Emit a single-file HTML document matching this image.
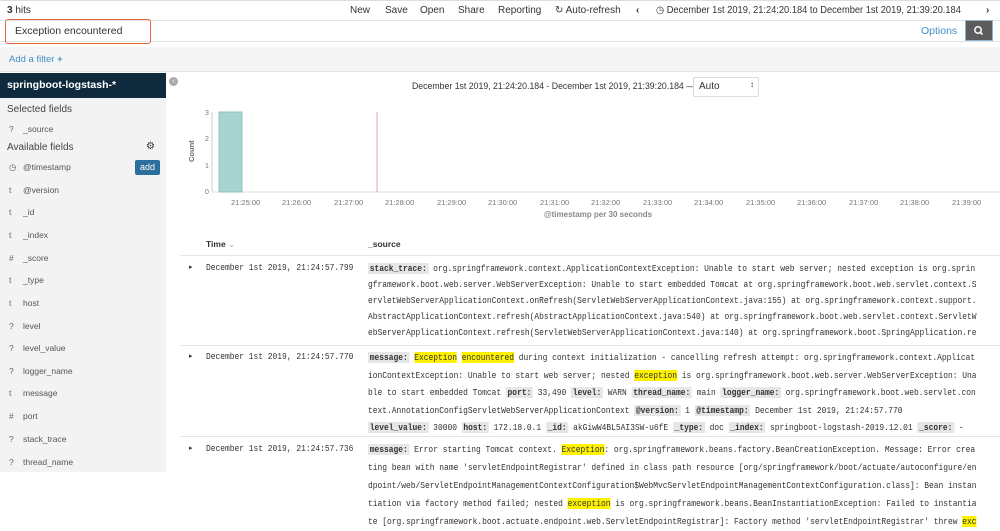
<!DOCTYPE html>
<html><head><style>
*{margin:0;padding:0;box-sizing:border-box}
body{width:1000px;height:522px;overflow:hidden;background:#fff;font-family:"Liberation Sans",sans-serif;color:#333;position:relative}
.a{position:absolute;white-space:nowrap}
.nav{font-size:10px;top:5px;color:#333}
.f{font-size:8.5px;color:#555;left:9px}
.f b{display:inline-block;width:14px;font-weight:normal;color:#666}
.mono{font-family:"Liberation Mono",monospace}
.src{font-size:9.4px;line-height:16px;left:368px;width:724px;white-space:normal;word-break:break-all;color:#333;transform:scaleX(0.845);transform-origin:0 0}
.k{background:#e6e6e6;font-weight:bold;padding:0 2px}
.h{background:#fff200}
.tl{font-size:9.4px;color:#333;transform:scaleX(0.845);transform-origin:0 0}
.xl{font-size:7.5px;color:#777;top:198px}
</style></head><body>
<div class="a" style="left:0;top:0;width:1000px;height:1px;background:#ddd"></div>
<div class="a nav" style="left:7px"><b>3</b> hits</div>
<div class="a nav" style="left:350px">New</div>
<div class="a nav" style="left:385px">Save</div>
<div class="a nav" style="left:420px">Open</div>
<div class="a nav" style="left:458px">Share</div>
<div class="a nav" style="left:498px">Reporting</div>
<div class="a nav" style="left:555px">&#x21bb; Auto-refresh</div>
<div class="a nav" style="left:636px;font-weight:bold">&#x2039;</div>
<div class="a nav" style="left:656px;transform:scaleX(0.93);transform-origin:0 0">&#x25F7; December 1st 2019, 21:24:20.184 to December 1st 2019, 21:39:20.184</div>
<div class="a nav" style="left:986px;font-weight:bold">&#x203A;</div>
<div class="a" style="left:0;top:20px;width:1000px;height:22px;border-top:1px solid #e4e4e4;border-bottom:1px solid #e4e4e4"></div>
<div class="a" style="left:5px;top:19px;width:146px;height:25px;border:1.5px solid #e8623f;border-radius:3px"></div>
<div class="a" style="left:15px;top:25px;font-size:10.5px;color:#333">Exception encountered</div>
<div class="a" style="left:921px;top:25px;font-size:10.5px;color:#3f8fc2">Options</div>
<div class="a" style="left:965px;top:20px;width:28px;height:21px;background:#5c5c5c;border:1px solid #8fb4cf"><svg width="26" height="19"><circle cx="12" cy="9" r="3.2" fill="none" stroke="#fff" stroke-width="1.5"/><line x1="14.3" y1="11.3" x2="16.5" y2="13.5" stroke="#fff" stroke-width="1.6"/></svg></div>
<div class="a" style="left:0;top:47px;width:1000px;height:25px;background:#f5f5f5;border-bottom:1px solid #e6e6e6"></div>
<div class="a" style="left:9px;top:54px;font-size:9.5px;color:#3f8fc2">Add a filter <b>+</b></div>
<div class="a" style="left:0;top:73px;width:166px;height:399px;background:#f3f3f3"></div>
<div class="a" style="left:0;top:73px;width:166px;height:25px;background:#0f2a3c;color:#fff;font-weight:bold;font-size:10.5px;padding:6px 7px">springboot-logstash-*</div>
<div class="a" style="left:7px;top:104px;font-size:10px;color:#444">Selected fields</div>
<div class="a f" style="top:124px"><b>?</b>_source</div>
<div class="a" style="left:7px;top:142px;font-size:10px;color:#444">Available fields</div>
<div class="a" style="left:146px;top:141px;font-size:10px;color:#333">&#x2699;</div>
<div class="a f" style="top:162px"><b>&#x25F7;</b>@timestamp</div>
<div class="a" style="left:135px;top:160px;width:25px;height:15px;background:#2d6f9c;color:#fff;font-size:9px;text-align:center;line-height:15px;border-radius:2px">add</div>
<div class="a f" style="top:185px"><b>t</b>@version</div>
<div class="a f" style="top:207px"><b>t</b>_id</div>
<div class="a f" style="top:230px"><b>t</b>_index</div>
<div class="a f" style="top:253px"><b>#</b>_score</div>
<div class="a f" style="top:275px"><b>t</b>_type</div>
<div class="a f" style="top:298px"><b>t</b>host</div>
<div class="a f" style="top:321px"><b>?</b>level</div>
<div class="a f" style="top:343px"><b>?</b>level_value</div>
<div class="a f" style="top:366px"><b>?</b>logger_name</div>
<div class="a f" style="top:388px"><b>t</b>message</div>
<div class="a f" style="top:411px"><b>#</b>port</div>
<div class="a f" style="top:434px"><b>?</b>stack_trace</div>
<div class="a f" style="top:457px"><b>?</b>thread_name</div>
<div class="a" style="left:169px;top:77px;width:9px;height:9px;border-radius:50%;background:#aaa;color:#fff;font-size:7px;line-height:9px;text-align:center">&#x2039;</div>
<div class="a" style="left:412px;top:81px;font-size:9px;color:#333;transform:scaleX(0.97);transform-origin:0 0">December 1st 2019, 21:24:20.184 - December 1st 2019, 21:39:20.184 —</div>
<div class="a" style="left:693px;top:77px;width:66px;height:20px;border:1px solid #ddd;border-radius:2px;font-size:10px;padding:3px 5px;background:#fff">Auto<span style="position:absolute;right:4px;top:2px;font-size:8px">&#x2195;</span></div>
<svg class="a" style="left:170px;top:100px" width="830" height="130">
<g font-family="Liberation Sans" font-size="7" fill="#777">
<text x="35" y="15">3</text><text x="35" y="41">2</text><text x="35" y="68">1</text><text x="35" y="94">0</text>
<text transform="translate(24,62) rotate(-90)" font-weight="bold" font-size="7.5" fill="#666">Count</text>
</g>
<line x1="42" y1="12" x2="42" y2="92" stroke="#ccc"/>
<line x1="42" y1="92" x2="830" y2="92" stroke="#ddd"/>
<rect x="49" y="12" width="23" height="80" fill="#a7d4cf" stroke="#8cc4be"/>
<line x1="207" y1="12" x2="207" y2="92" stroke="#e8a0a0"/>
<text x="428" y="117" font-family="Liberation Sans" font-size="8" font-weight="bold" fill="#888" text-anchor="middle">@timestamp per 30 seconds</text>
</svg>
<div class="a xl" style="left:231px">21:25:00</div><div class="a xl" style="left:282px">21:26:00</div><div class="a xl" style="left:334px">21:27:00</div><div class="a xl" style="left:385px">21:28:00</div><div class="a xl" style="left:437px">21:29:00</div><div class="a xl" style="left:488px">21:30:00</div><div class="a xl" style="left:540px">21:31:00</div><div class="a xl" style="left:591px">21:32:00</div><div class="a xl" style="left:643px">21:33:00</div><div class="a xl" style="left:694px">21:34:00</div><div class="a xl" style="left:746px">21:35:00</div><div class="a xl" style="left:797px">21:36:00</div><div class="a xl" style="left:849px">21:37:00</div><div class="a xl" style="left:900px">21:38:00</div><div class="a xl" style="left:952px">21:39:00</div>
<div class="a" style="left:206px;top:239px;font-size:8.5px;font-weight:bold">Time <span style="color:#aaa;font-weight:normal">&#x2304;</span></div>
<div class="a" style="left:368px;top:239px;font-size:8.5px;font-weight:bold">_source</div>
<div class="a" style="left:180px;top:255px;width:820px;height:1px;background:#e6e6e6"></div>
<div class="a" style="left:189px;top:263px;font-size:7px">&#x25B8;</div>
<div class="a mono tl" style="left:206px;top:262px">December 1st 2019, 21:24:57.799</div>
<div class="a mono src" style="top:261px"><span class="k">stack_trace:</span> org.springframework.context.ApplicationContextException: Unable to start web server; nested exception is org.springframework.boot.web.server.WebServerException: Unable to start embedded Tomcat at org.springframework.boot.web.servlet.context.ServletWebServerApplicationContext.onRefresh(ServletWebServerApplicationContext.java:155) at org.springframework.context.support.AbstractApplicationContext.refresh(AbstractApplicationContext.java:540) at org.springframework.boot.web.servlet.context.ServletWebServerApplicationContext.refresh(ServletWebServerApplicationContext.java:140) at org.springframework.boot.SpringApplication.re</div>
<div class="a" style="left:180px;top:345px;width:820px;height:1px;background:#e6e6e6"></div>
<div class="a" style="left:189px;top:352px;font-size:7px">&#x25B8;</div>
<div class="a mono tl" style="left:206px;top:351px">December 1st 2019, 21:24:57.770</div>
<div class="a mono src" style="top:349px;line-height:17.5px"><span class="k">message:</span> <span class="h">Exception</span> <span class="h">encountered</span> during context initialization - cancelling refresh attempt: org.springframework.context.ApplicationContextException: Unable to start web server; nested <span class="h">exception</span> is org.springframework.boot.web.server.WebServerException: Unable to start embedded Tomcat <span class="k">port:</span> 33,490 <span class="k">level:</span> WARN <span class="k">thread_name:</span> main <span class="k">logger_name:</span> org.springframework.boot.web.servlet.context.AnnotationConfigServletWebServerApplicationContext <span class="k">@version:</span> 1 <span class="k">@timestamp:</span> December 1st 2019, 21:24:57.770<br><span class="k">level_value:</span> 30000 <span class="k">host:</span> 172.18.0.1 <span class="k">_id:</span> akGiwW4BL5AI3SW-u6fE <span class="k">_type:</span> doc <span class="k">_index:</span> springboot-logstash-2019.12.01 <span class="k">_score:</span> -</div>
<div class="a" style="left:180px;top:436px;width:820px;height:1px;background:#e6e6e6"></div>
<div class="a" style="left:189px;top:444px;font-size:7px">&#x25B8;</div>
<div class="a mono tl" style="left:206px;top:443px">December 1st 2019, 21:24:57.736</div>
<div class="a mono src" style="top:441px;line-height:18px"><span class="k">message:</span> Error starting Tomcat context. <span class="h">Exception</span>: org.springframework.beans.factory.BeanCreationException. Message: Error creating bean with name 'servletEndpointRegistrar' defined in class path resource [org/springframework/boot/actuate/autoconfigure/endpoint/web/ServletEndpointManagementContextConfiguration$WebMvcServletEndpointManagementContextConfiguration.class]: Bean instantiation via factory method failed; nested <span class="h">exception</span> is org.springframework.beans.BeanInstantiationException: Failed to instantiate [org.springframework.boot.actuate.endpoint.web.ServletEndpointRegistrar]: Factory method 'servletEndpointRegistrar' threw <span class="h">exc</span></div>
</body></html>
